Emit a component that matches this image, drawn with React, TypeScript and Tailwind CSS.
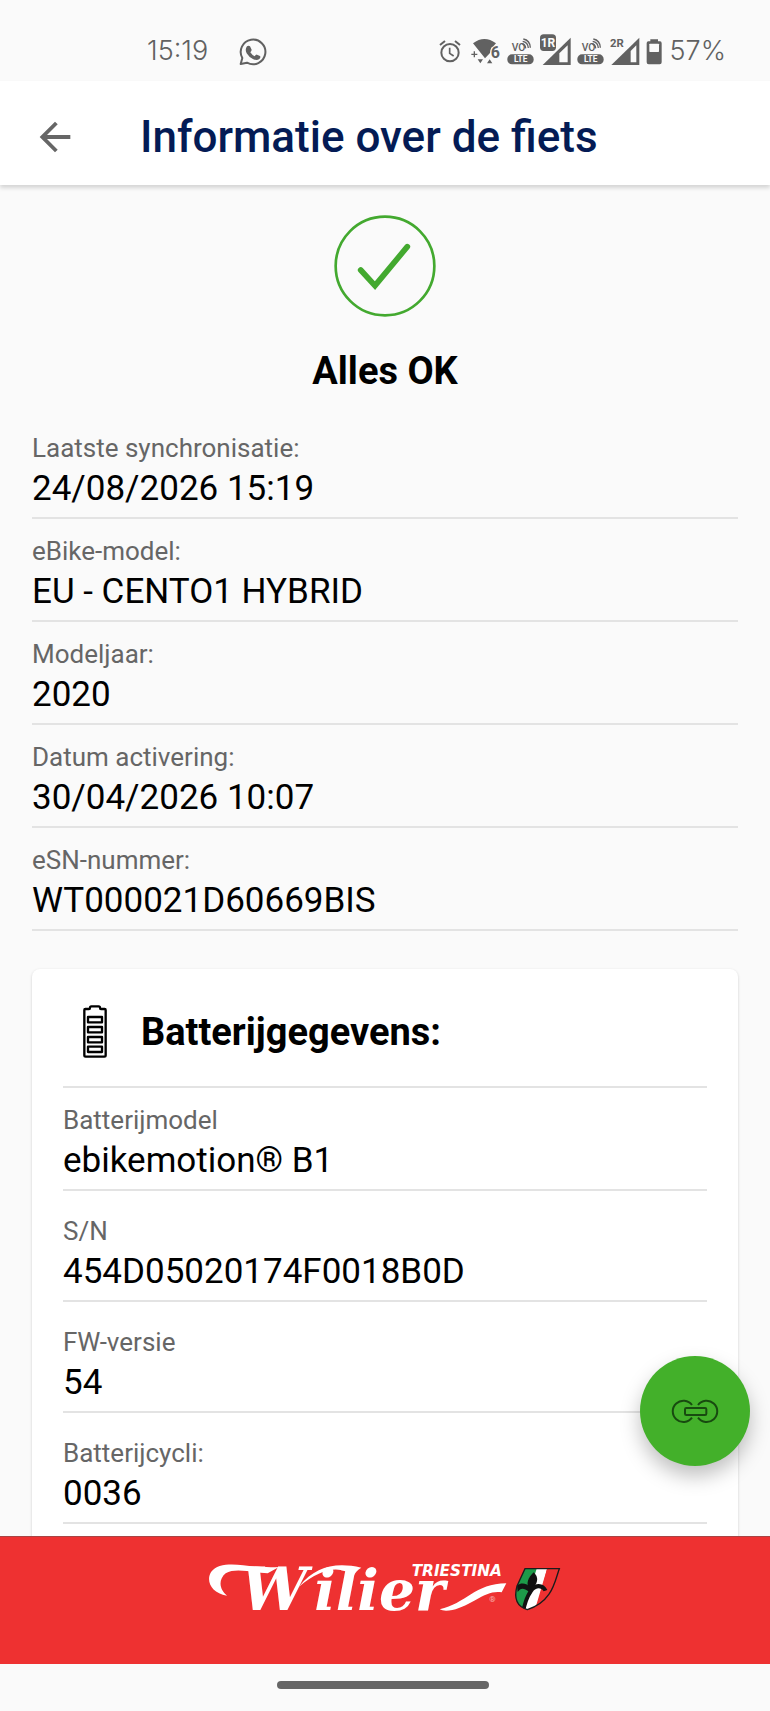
import { MdArrowBack } from "react-icons/md";

type Detail = { label: string; value: string };

const bikeDetails: Detail[] = [
  { label: "Laatste synchronisatie:", value: "24/08/2026 15:19" },
  { label: "eBike-model:", value: "EU - CENTO1 HYBRID" },
  { label: "Modeljaar:", value: "2020" },
  { label: "Datum activering:", value: "30/04/2026 10:07" },
  { label: "eSN-nummer:", value: "WT000021D60669BIS" },
];

const batteryDetails: Detail[] = [
  { label: "Batterijmodel", value: "ebikemotion® B1" },
  { label: "S/N", value: "454D05020174F0018B0D" },
  { label: "FW-versie", value: "54" },
  { label: "Batterijcycli:", value: "0036" },
];

const WhatsAppIcon = () => (
  <svg className="h-[38px] w-[30px]" viewBox="716 96 90 114" fill="none" aria-hidden="true">
    <path
      d="M724 189L729 171A37 37 0 1 1 743 185Z"
      stroke="currentColor"
      strokeWidth="6"
      strokeLinejoin="round"
    />
    <path
      d="M743 136q5-4 9 0l5 10q0 3-4 8 5 8 13 12 4-6 7-5l9 4q3 3-2 9-7 6-18 1-14-7-20-18-6-12 1-21z"
      fill="currentColor"
    />
  </svg>
);

const AlarmIcon = () => (
  <svg className="h-[38px] w-[26px]" viewBox="44 36 78 114" fill="none" stroke="currentColor" aria-hidden="true">
    <circle cx="77" cy="95" r="26" strokeWidth="6" />
    <path d="M76 80v17l12 8" strokeWidth="5" />
    <path d="M47 72l15-12M107 72L92 60" strokeWidth="6" />
  </svg>
);

const WifiIcon = () => (
  <svg className="h-[38px] w-[30px]" viewBox="142 36 90 114" fill="currentColor" aria-hidden="true">
    <path d="M148 67Q182 41 217 67L209 76Q202 78 200 88L199 96L184 112Z" />
    <path d="M143 100h18M152 91v18" stroke="currentColor" strokeWidth="4" />
    <path d="M162 115h16l-8 12zM190 127h16l-8-12z" />
    <text x="201" y="111" fontSize="48" fontWeight="700" fontFamily="Roboto, sans-serif">
      6
    </text>
  </svg>
);

const VolteIcon = () => (
  <svg className="h-[38px] w-[27px]" viewBox="250 36 81 114" aria-hidden="true">
    <text x="264" y="91" fontSize="31" fontWeight="500" fontFamily="Roboto, sans-serif" fill="currentColor">
      VO
    </text>
    <g fill="none" stroke="currentColor" strokeWidth="4">
      <path d="M296 69q9 2 10 13" />
      <path d="M297 61q16 3 17 20" />
      <path d="M299 54q20 4 21 26" />
    </g>
    <rect x="251" y="100" width="79" height="30" rx="14" fill="currentColor" />
    <text x="291" y="124" textAnchor="middle" fontSize="25" fontWeight="700" fontFamily="Roboto, sans-serif" fill="#fafafa">
      LTE
    </text>
  </svg>
);

const SignalOneIcon = () => (
  <svg className="h-[38px] w-[31px]" viewBox="345 36 93 114" aria-hidden="true">
    <path d="M353 132L437 50V132Z" fill="currentColor" />
    <path d="M403 97L428 73V124H403Z" fill="#fafafa" />
    <rect x="341" y="36" width="57" height="58" rx="14" fill="#fafafa" />
    <rect x="345" y="40" width="48" height="50" rx="11" fill="currentColor" />
    <text x="369" y="77" textAnchor="middle" fontSize="36" fontWeight="700" fontFamily="Roboto, sans-serif" fill="#fafafa">
      1R
    </text>
  </svg>
);

const SignalTwoIcon = () => (
  <svg className="h-[38px] w-[30px]" viewBox="556 36 90 114" aria-hidden="true">
    <path d="M560 132L644 50V132Z" fill="currentColor" />
    <path d="M618 90L635 73V124H618Z" fill="#fafafa" />
    <text x="556" y="77" fontSize="34" fontWeight="700" fontFamily="Roboto, sans-serif" fill="currentColor">
      2R
    </text>
  </svg>
);

const StatusBatteryIcon = () => (
  <svg className="h-[38px] w-[18px]" viewBox="667 36 54 114" aria-hidden="true">
    <path
      d="M680 55h23v6h6q5 0 5 6v57q0 6-6 6h-33q-6 0-6-6v-57q0-6 5-6h6z"
      fill="currentColor"
    />
    <rect x="677" y="68" width="29" height="25" rx="2" fill="#fafafa" />
  </svg>
);

const CheckIcon = () => (
  <svg className="size-[102px]" viewBox="103 103 306 306" fill="none" stroke="#43a92f" aria-hidden="true">
    <circle cx="256" cy="256" r="148" strokeWidth="8" />
    <path d="M183 268L226 315L323 198" strokeWidth="17" strokeLinecap="round" />
  </svg>
);

const BatteryIcon = () => (
  <svg className="h-[53px] w-6" viewBox="249 198 72 159" fill="none" stroke="#000" strokeWidth="7" strokeLinejoin="round" aria-hidden="true">
    <path d="M253 213q0-3 3-3h11q3 0 3-4t4-4h22q4 0 4 4t3 4h11q3 0 3 3v136q0 4-4 4h-56q-4 0-4-4z" />
    <rect x="264" y="234" width="42" height="16" />
    <rect x="264" y="264" width="42" height="16" />
    <rect x="264" y="294" width="42" height="16" />
    <rect x="264" y="323" width="42" height="16" />
  </svg>
);

const LinkIcon = () => (
  <svg className="h-[26px] w-12" viewBox="213 233 144 78" fill="none" stroke="#184a10" strokeWidth="6" aria-hidden="true">
    <path d="M276 254A32 32 0 1 0 276 292" />
    <path d="M294 254A32 32 0 1 1 294 292" />
    <rect x="255" y="263" width="64" height="21" rx="4" />
  </svg>
);

const BrandLogo = () => (
  <svg className="h-[100px] w-[356px]" viewBox="54 24 1068 300" role="img" aria-label="Wilier Triestina">
    <g fill="#fff">
      <path d="M114 197C52 188 42 124 92 108C140 94 190 116 270 111L236 130C190 128 140 112 110 130C86 150 92 180 114 197Z" />
      <path d="M330 170C380 108 440 96 517 113C505 120 499 128 493 138C455 106 400 112 330 170Z" />
      <path d="M752 238C830 222 858 160 952 160L938 187C890 178 850 226 790 240Q765 245 752 238Z" />
      <text y="239" fontFamily="'DejaVu Serif', serif" fontWeight="700" fontStyle="italic">
        <tspan x="156" fontSize="178">W</tspan>
        <tspan x="376" fontSize="170">ilier</tspan>
      </text>
      <text x="668" y="138" fontSize="46" fontFamily="'DejaVu Sans', sans-serif" fontWeight="700" fontStyle="italic">
        TRIESTINA
      </text>
      <text x="901" y="217" fontSize="24" fontFamily="Roboto, sans-serif" opacity="0.6">
        ®
      </text>
    </g>
    <clipPath id="shield">
      <path d="M1008 116H1111C1098 150 1092 215 1015 239C985 230 974 205 984 168Z" />
    </clipPath>
    <g clipPath="url(#shield)">
      <path d="M970 110H1048L1012 245H970Z" fill="#1d9a49" />
      <path d="M1045 110H1076L1040 245H1002Z" fill="#fff" />
      <path d="M1076 110H1120V245H1036Z" fill="#ee3131" />
      <path
        d="M1034 127C1050 142 1046 158 1034 172L1020 176C1010 160 1018 142 1034 127Z"
        fill="#111"
      />
      <path
        d="M1036 165C1052 158 1068 164 1075 180L1064 184C1054 170 1040 174 1031 186C1018 204 1014 222 1009 240L999 234C1004 212 1010 198 1018 184C1004 172 994 174 986 186L984 166C1000 156 1014 162 1024 172Z"
        fill="#111"
      />
    </g>
    <path
      d="M1008 116H1111C1098 150 1092 215 1015 239C985 230 974 205 984 168Z"
      fill="none"
      stroke="#1b1b1b"
      strokeWidth="4"
    />
  </svg>
);

const DetailRow = ({ label, value, spaced }: Detail & { spaced?: boolean }) => (
  <div className={`border-b-2 border-[#e3e3e3] pb-1 ${spaced ? "pt-6" : "pt-4"}`}>
    <dt className="text-[26px] leading-[33px] text-[#666]">{label}</dt>
    <dd className="text-[35px] leading-[48px] text-black">{value}</dd>
  </div>
);

const StatusBar = () => (
  <div className="flex h-[81px] items-center justify-between pt-[22px] pr-11 pl-[147px] text-[#616161]">
    <div className="flex items-center gap-[30px]">
      <span className="font-[Inter,sans-serif] text-[27px] font-light">15:19</span>
      <WhatsAppIcon />
    </div>
    <div className="flex items-center gap-1.5">
      <AlarmIcon />
      <WifiIcon />
      <VolteIcon />
      <SignalOneIcon />
      <VolteIcon />
      <SignalTwoIcon />
      <StatusBatteryIcon />
      <span className="font-[Inter,sans-serif] text-[27px] font-light">57%</span>
    </div>
  </div>
);

export default function App() {
  return (
    <div className="flex h-screen flex-col bg-[#fafafa] font-[Roboto,sans-serif]">
      <StatusBar />

      <header className="relative z-10 flex h-[104px] items-center gap-[62px] bg-white pt-2 pl-8 shadow-[0_3px_4px_rgba(0,0,0,0.15)]">
        <button type="button" aria-label="Terug" className="text-[#666]">
          <MdArrowBack size={46} />
        </button>
        <h1 className="text-[44px] leading-[54px] font-medium text-[#041b55]">
          Informatie over de fiets
        </h1>
      </header>

      <div className="relative min-h-0 flex-1">
        <main className="h-full overflow-y-auto px-8 pt-[30px] [scrollbar-width:none]">
          <div className="flex flex-col items-center gap-[30px]">
            <CheckIcon />
            <h2 className="text-[38px] leading-[48px] font-bold text-black">Alles OK</h2>
          </div>

          <dl className="mt-[21px]">
            {bikeDetails.map((item) => (
              <DetailRow key={item.label} {...item} />
            ))}
          </dl>

          <section className="mt-[38px] rounded-lg bg-white px-[31px] pb-16 shadow-[0_1px_3px_rgba(0,0,0,0.18)]">
            <div className="flex items-center gap-[34px] border-b-2 border-[#e3e3e3] pt-9 pb-7 pl-5">
              <BatteryIcon />
              <h2 className="text-[38px] leading-[48px] font-bold text-black">Batterijgegevens:</h2>
            </div>
            <dl>
              {batteryDetails.map((item, idx) => (
                <DetailRow key={item.label} {...item} spaced={idx > 0} />
              ))}
            </dl>
          </section>
        </main>

        <button
          type="button"
          aria-label="Koppelen"
          className="absolute right-5 bottom-[70px] flex size-[110px] items-center justify-center rounded-full bg-[#43b02a] shadow-[0_10px_20px_rgba(0,0,0,0.25)]"
        >
          <LinkIcon />
        </button>
      </div>

      <footer>
        <div className="flex h-32 justify-center border-t border-[#a84444] bg-[#ee3131] pt-px">
          <BrandLogo />
        </div>
        <div className="flex h-[47px] justify-center pt-[17px] pr-1">
          <div className="h-2 w-[212px] rounded-full bg-[#666]" />
        </div>
      </footer>
    </div>
  );
}
